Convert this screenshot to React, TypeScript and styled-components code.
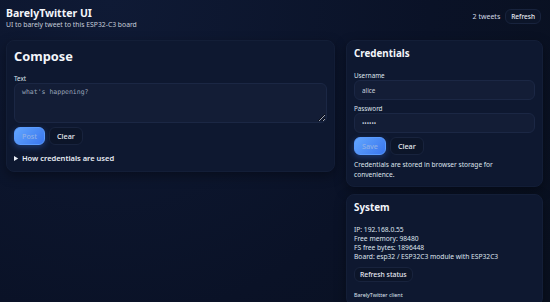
import React from 'react';
import styled, { createGlobalStyle } from 'styled-components';

const GlobalStyle = createGlobalStyle`
  html, body {
    margin: 0;
    padding: 0;
    background: #0a1227;
    color: #e5e9f2;
    font-family: "Noto Sans", "Open Sans", sans-serif;
  }
  * { box-sizing: border-box; }
`;

const Page = styled.div`
  height: 302px;
  padding: 6px 7px 0 6px;
  background: radial-gradient(circle at 20% 0%, #0f1a35 0%, #0a1227 60%, #09101f 100%);
  overflow: hidden;
`;

const Header = styled.header`
  display: flex;
  justify-content: space-between;
  align-items: flex-start;
  margin-bottom: 10px;
`;

const Title = styled.h1`
  margin: 0;
  font-size: 10.5px;
  font-weight: 700;
  line-height: 14px;
  color: #f4f6fb;
`;

const Subtitle = styled.div`
  font-size: 6.8px;
  line-height: 10px;
  color: #c7cedb;
`;

const HeaderRight = styled.div`
  display: flex;
  align-items: center;
  gap: 5px;
  padding-top: 3px;
  margin-right: 2px;
`;

const Count = styled.span`
  font-size: 7px;
  color: #d4dae6;
`;

const Grid = styled.main`
  display: grid;
  grid-template-columns: 1fr 197px;
  gap: 11px;
  align-items: start;
`;

const Column = styled.div`
  display: flex;
  flex-direction: column;
  gap: 7px;
`;

const Card = styled.section`
  background: #0e1830;
  border: 1px solid #131e37;
  border-radius: 8px;
  padding: 6px 7px 6px;
  font-size: 7px;
  box-shadow: 0 4px 12px rgba(0, 0, 0, 0.35);
`;

const CardTitle = styled.h2<{ $big?: boolean; $tight?: boolean }>`
  margin: 0 0 ${p => (p.$tight ? '0' : p.$big ? '9px' : '10px')};
  font-size: ${p => (p.$big ? '12.8px' : '9.8px')};
  font-weight: 700;
  line-height: ${p => (p.$big ? '18px' : '14px')};
  color: #f4f6fb;
`;

const Label = styled.label`
  display: block;
  font-size: 6.3px;
  line-height: 9px;
  color: #dfe4ee;
`;

const TextArea = styled.textarea`
  display: block;
  width: 100%;
  height: 40px;
  resize: vertical;
  background: #131d36;
  border: 1px solid #1b2744;
  border-radius: 6px;
  padding: 4px 7px;
  font-family: "DejaVu Sans Mono", "Liberation Mono", monospace;
  font-size: 6.5px;
  color: #c9d0de;
  outline: none;
  &::placeholder { color: #9aa4b8; }
`;

const Input = styled.input`
  display: block;
  width: 100%;
  height: 20px;
  background: #131d36;
  border: 1px solid #1b2744;
  border-radius: 6px;
  padding: 0 7px;
  font-family: inherit;
  font-size: 6.3px;
  color: #c9d0de;
  outline: none;
  margin-bottom: 4px;
  &::placeholder { color: #9aa4b8; }
`;

const Actions = styled.div`
  display: flex;
  gap: 4px;
  margin-top: 4px;
`;

const Button = styled.button<{ $primary?: boolean; $small?: boolean }>`
  height: ${p => (p.$small ? '15px' : '18px')};
  padding: 0 ${p => (p.$small ? '5px' : '7px')};
  border-radius: 6px;
  font-family: inherit;
  font-size: ${p => (p.$small ? '6.5px' : '7.2px')};
  font-weight: 500;
  cursor: pointer;
  border: 1px solid ${p => (p.$primary ? '#5a9bff' : '#18233d')};
  background: ${p => (p.$primary ? 'linear-gradient(135deg, #62a6ff, #3a76ee)' : '#0c1529')};
  color: ${p => (p.$primary ? '#8fb0e6' : '#e8ecf4')};
  box-shadow: ${p => (p.$primary ? '0 2px 6px rgba(59, 123, 240, 0.35)' : 'none')};
`;

const WideButton = styled(Button)`
  display: block;
  height: 15px;
  padding: 0 5px;
  font-size: 6.8px;
`;

const Details = styled.details`
  margin-top: 9px;
  margin-bottom: 2px;
  font-size: 7.5px;
  line-height: 9px;
  font-weight: 600;
  color: #e8ecf4;
  summary { cursor: pointer; }
`;

const Note = styled.p`
  margin: 5px 0 0;
  font-size: 6.6px;
  line-height: 10px;
  color: #dfe4ee;
`;

const InfoList = styled.div`
  margin-top: 10px;
  font-size: 6.7px;
  line-height: 9px;
  color: #dfe4ee;
  margin-bottom: 6px;
`;

const Footer = styled.div`
  margin-top: 9px;
  font-size: 5.4px;
  line-height: 8px;
  color: #dfe4ee;
`;

export default function App() {
  return (
    <Page>
      <GlobalStyle />
      <Header>
        <div>
          <Title>BarelyTwitter UI</Title>
          <Subtitle>UI to barely tweet to this ESP32-C3 board</Subtitle>
        </div>
        <HeaderRight>
          <Count>2 tweets</Count>
          <Button $small>Refresh</Button>
        </HeaderRight>
      </Header>
      <Grid>
        <Column>
          <Card>
            <CardTitle $big>Compose</CardTitle>
            <Label>Text</Label>
            <TextArea placeholder="what's happening?" />
            <Actions>
              <Button $primary>Post</Button>
              <Button>Clear</Button>
            </Actions>
            <Details>
              <summary>How credentials are used</summary>
            </Details>
          </Card>
        </Column>
        <Column>
          <Card>
            <CardTitle>Credentials</CardTitle>
            <Label>Username</Label>
            <Input defaultValue="alice" />
            <Label>Password</Label>
            <Input type="password" defaultValue="secret" />
            <Actions>
              <Button $primary>Save</Button>
              <Button>Clear</Button>
            </Actions>
            <Note>Credentials are stored in browser storage for convenience.</Note>
          </Card>
          <Card>
            <CardTitle $tight>System</CardTitle>
            <InfoList>
              <div>IP: 192.168.0.55</div>
              <div>Free memory: 98480</div>
              <div>FS free bytes: 1896448</div>
              <div>Board: esp32 / ESP32C3 module with ESP32C3</div>
            </InfoList>
            <WideButton>Refresh status</WideButton>
            <Footer>BarelyTwitter client</Footer>
          </Card>
        </Column>
      </Grid>
    </Page>
  );
}
